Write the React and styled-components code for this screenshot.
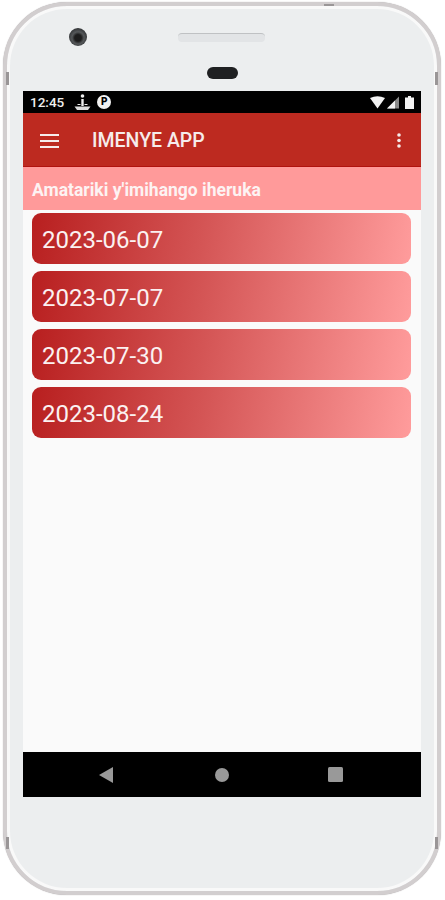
import React from "react";
import styled, { createGlobalStyle } from "styled-components";

const GlobalStyle = createGlobalStyle`
  html, body {
    margin: 0;
    padding: 0;
    background: #fff;
    font-family: Roboto, "Liberation Sans", sans-serif;
  }
`;

const Page = styled.div`
  width: 445px;
  height: 900px;
  padding: 2px 4px 5px 3px;
  box-sizing: border-box;
  overflow: hidden;
`;

const PhoneShell = styled.div`
  position: relative;
  height: 893px;
  box-sizing: border-box;
  border: 4px solid #d2cecf;
  border-radius: 64px;
  background: #eceeef;
  box-shadow: inset 0 0 0 3px #f9f9f9, 0 0 1px #a9a5a6;
  display: flex;
  flex-direction: column;
  align-items: center;
`;

const AntennaMark = styled.span`
  position: absolute;
  background: #9a9697;
  ${(p) => p.$side === "left" && "left: -1px; top: 66px; width: 3px; height: 13px;"}
  ${(p) => p.$side === "right" && "right: -1px; top: 66px; width: 3px; height: 13px;"}
  ${(p) => p.$side === "top" && "left: 317px; top: -2px; width: 10px; height: 2px;"}
  ${(p) => p.$side === "bottomLeft" && "left: -1px; bottom: 42px; width: 3px; height: 12px;"}
  ${(p) => p.$side === "bottomRight" && "right: -1px; bottom: 42px; width: 3px; height: 12px;"}
`;

const TopBezel = styled.div`
  width: 398px;
  height: 85px;
  flex: none;
  display: flex;
  flex-direction: column;
`;

const SensorRow = styled.div`
  display: flex;
  align-items: center;
  margin-top: 23px;
  height: 16px;
`;

const Camera = styled.div`
  width: 18px;
  height: 18px;
  margin-left: 46px;
  border-radius: 50%;
  background: radial-gradient(circle at 50% 55%, #1d1d1d 0 25%, #55585a 45%, #303234 75%);
`;

const Speaker = styled.div`
  width: 87px;
  height: 9px;
  margin-left: 91px;
  box-sizing: border-box;
  border-top: 1px solid #bfc1c3;
  border-radius: 4px;
  background: #e2e4e6;
`;

const Sensor = styled.div`
  width: 31px;
  height: 12px;
  margin: 22px auto 0;
  border-radius: 6px;
  background: #1f2022;
`;

const Screen = styled.div`
  width: 398px;
  height: 706px;
  flex: none;
  display: flex;
  flex-direction: column;
  background: #fafafa;
`;

const StatusBar = styled.div`
  height: 22px;
  flex: none;
  background: #000;
  color: #eee;
  display: flex;
  align-items: center;
  padding: 0 7px;
  font-size: 13.5px;
  font-weight: 500;
`;

const StatusLeft = styled.div`
  display: flex;
  align-items: center;
  gap: 6px;
  & > span:first-child {
    margin-right: 4px;
  }
`;

const StatusRight = styled.div`
  margin-left: auto;
  display: flex;
  align-items: center;
  gap: 2px;
  & > svg:last-child {
    margin-left: 4px;
  }
`;

const PBadge = styled.span`
  width: 14px;
  height: 14px;
  border-radius: 50%;
  background: #f2f2f2;
  color: #000;
  font-size: 10px;
  font-weight: 900;
  line-height: 14px;
  text-align: center;
`;

const Toolbar = styled.div`
  height: 54px;
  flex: none;
  box-sizing: border-box;
  background: #bd2a20;
  border-bottom: 1px solid #b0130f;
  display: flex;
  align-items: center;
  padding: 2px 20px 0 17px;
  color: #f6eceb;
`;

const Title = styled.div`
  margin-left: 33px;
  font-size: 19.5px;
  font-weight: 500;
`;

const MoreButton = styled.div`
  margin-left: auto;
  display: flex;
`;

const SubHeader = styled.div`
  height: 43px;
  flex: none;
  box-sizing: border-box;
  background: #ff9a9a;
  color: #fdf3f3;
  font-size: 17.5px;
  font-weight: 700;
  display: flex;
  align-items: center;
  padding: 2px 0 0 9px;
`;

const DateList = styled.div`
  flex: 1;
  display: flex;
  flex-direction: column;
  gap: 7px;
  padding: 3px 10px 0 9px;
`;

const DateCard = styled.div`
  height: 51px;
  box-sizing: border-box;
  border-radius: 9px;
  background: linear-gradient(100deg, #b81f1f 0%, #d45555 45%, #ff9c9c 100%);
  color: #fbf1f1;
  font-size: 24px;
  display: flex;
  align-items: center;
  padding: 3px 0 0 10px;
`;

const NavBar = styled.div`
  height: 45px;
  flex: none;
  background: #000;
  display: grid;
  grid-template-columns: 116px 116px 110px;
  justify-items: center;
  align-items: center;
  padding-left: 25px;
`;

const dates = ["2023-06-07", "2023-07-07", "2023-07-30", "2023-08-24"];

function App() {
  return (
    <Page>
      <GlobalStyle />
      <PhoneShell>
        <AntennaMark $side="left" />
        <AntennaMark $side="right" />
        <AntennaMark $side="top" />
        <AntennaMark $side="bottomLeft" />
        <AntennaMark $side="bottomRight" />
        <TopBezel>
          <SensorRow>
            <Camera />
            <Speaker />
          </SensorRow>
          <Sensor />
        </TopBezel>
        <Screen>
          <StatusBar>
            <StatusLeft>
              <span>12:45</span>
              <svg width="17" height="17" viewBox="0 0 17 17">
                <circle cx="8.5" cy="2" r="1.8" fill="#eee" />
                <path d="M7.3 5h2.4v7H7.3z" fill="#eee" />
                <path d="M3.5 10.5h3M10.5 10.5h3" stroke="#eee" strokeWidth="1.2" />
                <path d="M0.5 12.5h16l-2.5 3.5H3z" fill="#ddd" />
              </svg>
              <PBadge>P</PBadge>
            </StatusLeft>
            <StatusRight>
              <svg width="15" height="13" viewBox="0 0 15 13">
                <path d="M0 2Q7.5-1.5 15 2L7.5 12.5z" fill="#f2f2f2" />
              </svg>
              <svg width="12" height="13" viewBox="0 0 12 13">
                <path d="M0 12.5L12 .5v12z" fill="#8a8a8a" />
                <path d="M0 12.5L8 4.5v8z" fill="#f2f2f2" />
              </svg>
              <svg width="9" height="13" viewBox="0 0 9 13">
                <path d="M3 0h3v1.5h3V13H0V1.5h3z" fill="#f2f2f2" />
              </svg>
            </StatusRight>
          </StatusBar>
          <Toolbar>
            <svg width="19" height="14" viewBox="0 0 19 14">
              <path d="M0 1h19M0 7h19M0 13h19" stroke="#f6eceb" strokeWidth="2" />
            </svg>
            <Title>IMENYE APP</Title>
            <MoreButton>
              <svg width="4" height="15" viewBox="0 0 4 15">
                <circle cx="2" cy="2" r="1.8" fill="#f6eceb" />
                <circle cx="2" cy="7.5" r="1.8" fill="#f6eceb" />
                <circle cx="2" cy="13" r="1.8" fill="#f6eceb" />
              </svg>
            </MoreButton>
          </Toolbar>
          <SubHeader>Amatariki y'imihango iheruka</SubHeader>
          <DateList>
            {dates.map((d) => (
              <DateCard key={d}>{d}</DateCard>
            ))}
          </DateList>
          <NavBar>
            <svg width="14" height="16" viewBox="0 0 14 16">
              <path d="M14 0v16L0 8z" fill="#999" />
            </svg>
            <svg width="14" height="14" viewBox="0 0 14 14">
              <circle cx="7" cy="7" r="7" fill="#999" />
            </svg>
            <svg width="15" height="15" viewBox="0 0 15 15">
              <rect width="15" height="15" rx="1.5" fill="#999" />
            </svg>
          </NavBar>
        </Screen>
      </PhoneShell>
    </Page>
  );
}

export default App;
